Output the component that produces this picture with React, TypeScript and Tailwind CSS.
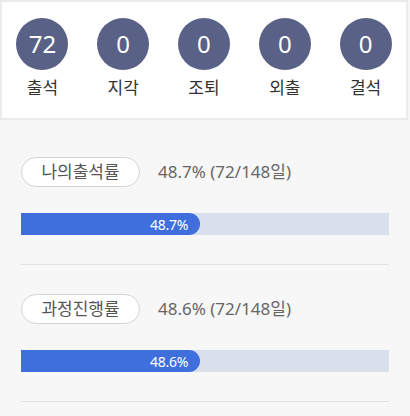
import React from "react";

const stats = [
  { value: 72, label: "출석" },
  { value: 0, label: "지각" },
  { value: 0, label: "조퇴" },
  { value: 0, label: "외출" },
  { value: 0, label: "결석" },
];

const rates = [
  { title: "나의출석률", pct: "48.7%", detail: "48.7% (72/148일)", fill: 179 },
  { title: "과정진행률", pct: "48.6%", detail: "48.6% (72/148일)", fill: 179 },
];

export default function App() {
  return (
    <div
      className="w-[410px] h-[416px] overflow-hidden bg-[#f7f7f7]"
      style={{ fontFamily: '"Noto Sans", "Noto Sans CJK KR", sans-serif' }}
    >
      <div className="w-[408px] h-[120px] bg-white border-2 border-[#ececec] grid grid-cols-5 pt-[16px]">
        {stats.map((s) => (
          <div key={s.label} className="flex flex-col items-center">
            <div className="w-[52px] h-[52px] rounded-full bg-[#596186] flex items-center justify-center text-white text-[24px] leading-none">
              {s.value}
            </div>
            <div className="mt-[7px] text-[17px] leading-[22px] text-[#333]">{s.label}</div>
          </div>
        ))}
      </div>

      <div className="px-[21px] w-[410px]">
        {rates.map((r, i) => (
          <div key={r.title} className={i === 0 ? "pt-[37px]" : "pt-[29px]"}>
            <div className="flex items-center">
              <div className="w-[119px] h-[30px] rounded-full border border-[#d4d4d4] bg-white flex items-center justify-center text-[17px] text-[#555]">
                {r.title}
              </div>
              <div className="ml-[18px] text-[17px] text-[#666]">{r.detail}</div>
            </div>
            <div className="mt-[26px] w-[368px] h-[22px] bg-[#d9dfeb]">
              <div
                className="h-[22px] rounded-r-full bg-[#3e6fdc] flex items-center justify-end pr-[12px] text-white text-[14px] tracking-[-0.3px]"
                style={{ width: r.fill }}
              >
                {r.pct}
              </div>
            </div>
            <div className="mt-[29px] w-[368px] h-[1px] bg-[#e2e2e2]" />
          </div>
        ))}
      </div>
    </div>
  );
}
